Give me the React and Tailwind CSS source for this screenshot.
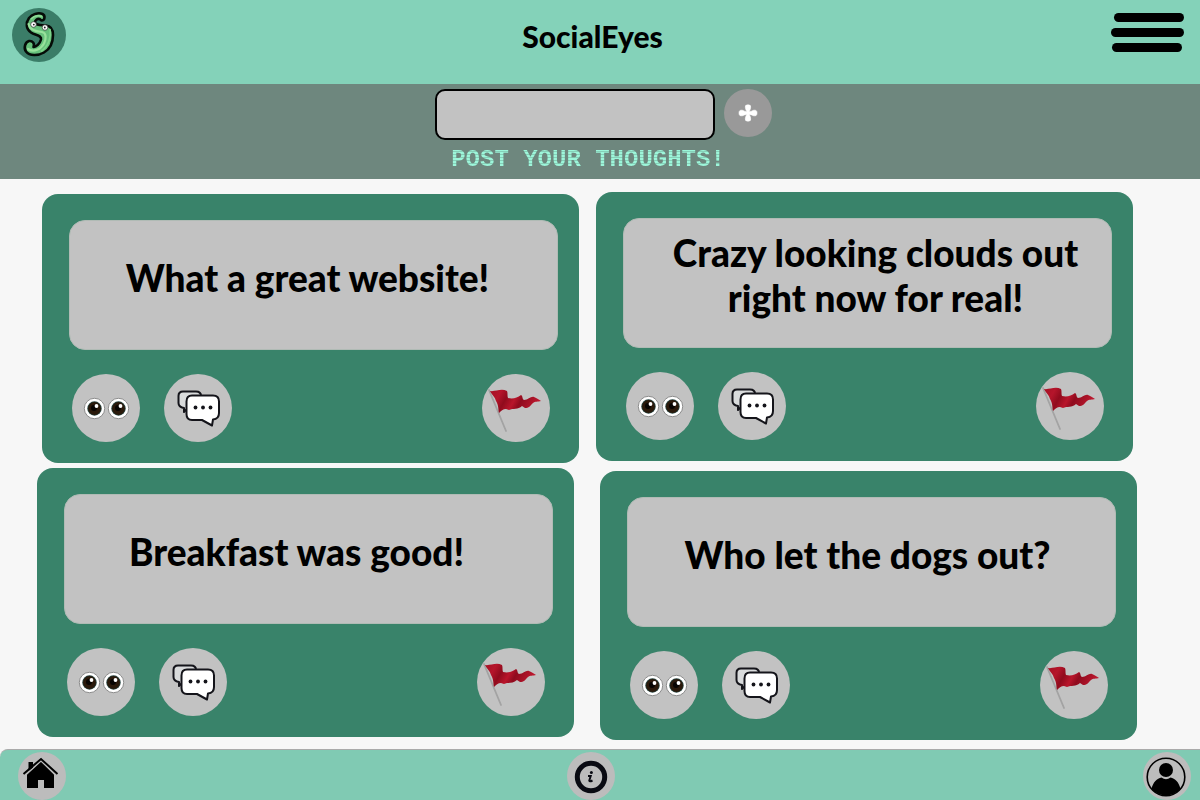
import React from "react";

function LogoIcon() {
  return (
    <svg viewBox="12 8 54 54" className="size-[54px]" aria-hidden="true">
      <circle cx="39" cy="35" r="27" fill="#3b7d68" />
      <path
        d="M41.5 20.5C45 20.5 45.500 15.500 42.500 14C38 12 32 14.500 29 18C25.500 23 26 29 31 32.500C35 35.500 42 35 41 39.500C40 43.500 36 47.500 33.500 47C35 43.500 32.500 40.500 29 41C25 42 23.500 48 26 51.500C29.500 56 38 56 44 52.500C50 49 53 42 53 35C53 29 51 26 46 25.500C41 25 36.500 25.500 35 23C34.500 20 37.500 18.500 39.500 19C40.500 19.500 41 20.500 41.500 20.500Z"
        fill="#66c07b"
        stroke="#050b07"
        strokeWidth="2.6"
        strokeLinejoin="round"
      />
      <path d="M28.500 24C29.500 30 36 31.500 42 32C47 33 46 39 44 43.500C41 49 34 53 28 49" fill="none" stroke="#98e19b" strokeWidth="2.2" strokeLinecap="round" />
      <path d="M50 29C51.500 37 48.500 46 41 51.500" fill="none" stroke="#7fd58b" strokeWidth="1.6" />
      <path d="M31 19C34 16 38 15 42 16.500" fill="none" stroke="#8fdb96" strokeWidth="1.5" />
      <circle cx="33.5" cy="24.5" r="2.8" fill="#fff" stroke="#333" strokeWidth=".7" />
      <circle cx="45" cy="27.5" r="2.8" fill="#fff" stroke="#333" strokeWidth=".7" />
      <circle cx="33.8" cy="24.6" r=".9" fill="#222" />
      <circle cx="44.8" cy="27.5" r=".9" fill="#222" />
    </svg>
  );
}

function Eye({ cx }) {
  return (
    <g>
      <circle cx={cx} cy="34.5" r="10.2" fill="#fff" stroke="#777" strokeWidth=".8" />
      <circle cx={cx} cy="34.5" r="7.2" fill="#24423f" />
      <circle cx={cx} cy="34.5" r="6.4" fill="#2a190b" />
      <circle cx={cx - 0.5} cy="34" r="3" fill="#080503" />
      <circle cx={cx + 2} cy="32" r="1.9" fill="#fff" />
    </g>
  );
}

function EyesIcon() {
  return (
    <svg viewBox="0 0 68 68" className="size-full" aria-hidden="true">
      <Eye cx={22.5} />
      <Eye cx={46.5} />
    </svg>
  );
}

function CommentsIcon() {
  return (
    <svg viewBox="0 0 68 68" className="size-full" stroke="#14141a" strokeWidth="2" strokeLinejoin="round" aria-hidden="true">
      <path d="M19 17.5H32Q37 17.5 37 22V34H24L20 38V34Q14.5 33 14.5 29V22Q14.5 17.5 19 17.5Z" fill="#d9dbdc" />
      <path d="M28 21.5H49Q55 21.5 55 27.5V39Q55 45 49 45.5L48 51.5L38 46H28Q22.5 46 22.5 40V27.5Q22.5 21.5 28 21.5Z" fill="#fff" />
      <g fill="#14141a" stroke="none">
        <circle cx="31.5" cy="33.5" r="1.9" />
        <circle cx="39" cy="33.5" r="1.9" />
        <circle cx="46.5" cy="33.5" r="1.9" />
      </g>
    </svg>
  );
}

function FlagIcon() {
  return (
    <svg viewBox="0 0 68 68" className="size-full" aria-hidden="true">
      <defs>
        <linearGradient id="flagRed" x1="0" x2="1" y1="0" y2="0.25">
          <stop offset="0" stopColor="#a51024" />
          <stop offset=".22" stopColor="#b5152b" />
          <stop offset=".38" stopColor="#900b1d" />
          <stop offset=".55" stopColor="#b9152b" />
          <stop offset=".68" stopColor="#8f0b1e" />
          <stop offset="1" stopColor="#bb182e" />
        </linearGradient>
      </defs>
      <path d="M7 16L24 57" stroke="#a3a3a3" strokeWidth="1.8" strokeLinecap="round" />
      <path d="M8 17C13 18 19 14 25 17C26 19 25 22 26 24C31 25 35 24 39 21C41 22 40 25 42 26C46 26 49 22 52 23C55 24 57 26 59 27C56 28 53 27 51 29C48 32 47 34 43 34L40 32C36 36 31 34 27 36L24 35C21 35 19 37 17 39C16 35 17 32 14 27C13 23 10 21 8 17Z" fill="url(#flagRed)" />
    </svg>
  );
}

function HomeIcon() {
  return (
    <svg viewBox="0 0 48 48" className="size-full" aria-hidden="true">
      <path d="M10.5 19V10H15V16Z" fill="#000" />
      <path d="M9 36V21.5L23 9.5L36 21.5V36H26V28H20V36Z" fill="#000" />
      <path d="M7.500 23.200L23 9L37.500 23.200" fill="none" stroke="#bcbcbc" strokeWidth="1.2" />
      <path d="M5.5 22L23 7L39.5 22" fill="none" stroke="#000" strokeWidth="2" />
    </svg>
  );
}

function InfoIcon() {
  return (
    <svg viewBox="0 0 48 48" className="size-full" aria-hidden="true">
      <circle cx="24" cy="25" r="13.7" fill="none" stroke="#090a12" strokeWidth="5" />
      <circle cx="24.4" cy="20.6" r="1.5" fill="#090a12" />
      <path d="M21 24H23.700L22.300 28.500Q22.500 30 25.500 28.500" fill="none" stroke="#090a12" strokeWidth="2" />
    </svg>
  );
}

function ProfileIcon() {
  return (
    <svg viewBox="0 0 48 48" className="size-full" aria-hidden="true">
      <circle cx="23" cy="25" r="18.8" fill="none" stroke="#000" strokeWidth="1.6" />
      <circle cx="23" cy="18" r="7" fill="#000" />
      <path d="M8.500 37C10 30 14 26.500 18.500 25.500Q23 29 27.500 25.500C32 26.500 36 30 37.500 37Q31 43.500 23 43.500T8.500 37Z" fill="#000" />
    </svg>
  );
}

function RoundButton({ label, className = "", children }) {
  return (
    <button type="button" aria-label={label} className={`size-[68px] shrink-0 rounded-full bg-[#c2c2c2] ${className}`}>
      {children}
    </button>
  );
}

function PostCard({ text, className, textClassName = "" }) {
  return (
    <article className={`rounded-2xl bg-[#39836a] pt-[26px] pr-[21px] pb-[21px] pl-[27px] ${className}`}>
      <div className={`flex h-[130px] items-center justify-center rounded-2xl border border-[#b0bbb5] bg-[#c2c2c2] pb-4 ${textClassName}`}>
        <p className="text-center text-[37px] leading-[45px] font-black whitespace-pre-line">{text}</p>
      </div>
      <div className="mt-6 flex gap-6 pr-2 pl-[3px]">
        <RoundButton label="Watch"><EyesIcon /></RoundButton>
        <RoundButton label="Comments"><CommentsIcon /></RoundButton>
        <RoundButton label="Report" className="ml-auto"><FlagIcon /></RoundButton>
      </div>
    </article>
  );
}

export default function App() {
  return (
    <div className="flex min-h-screen flex-col bg-[#f7f7f7] font-['Lato',sans-serif] text-black">
      <header className="flex h-[84px] items-start justify-between bg-[#84d2b9] pt-2 pr-4 pl-3">
        <a href="#home" aria-label="SocialEyes home"><LogoIcon /></a>
        <h1 className="pt-2 pl-2 text-[30px] leading-10 font-black">SocialEyes</h1>
        <button type="button" aria-label="Menu" className="mt-[5px]">
          <svg viewBox="0 0 73 39" className="h-[39px] w-[73px]" aria-hidden="true">
            <rect x="3" width="70" height="9" rx="4.5" />
            <rect y="15" width="73" height="9" rx="4.5" />
            <rect x="1" y="30" width="70" height="9" rx="4.5" />
          </svg>
        </button>
      </header>

      <form className="flex h-[95px] flex-col items-center bg-[#6e877e] pt-[5px]" onSubmit={(e) => e.preventDefault()}>
        <div className="flex items-start gap-[9px] pl-[7px]">
          <input id="thought" type="text" className="h-[51px] w-[280px] rounded-[10px] border-2 border-black bg-[#c2c2c2] px-3 text-lg outline-none" />
          <button type="submit" aria-label="Post" className="size-12 rounded-full bg-[#999]">
            <svg viewBox="0 0 48 48" className="size-full" fill="#fff" aria-hidden="true">
              <path d="M21.3 18Q21 15.800 24 15.800T26.700 18Q26.500 20.500 25.200 22.800Q27.500 22.300 29.500 21.300Q33 20.500 33 24T29.500 26.700Q27.500 25.700 25.200 25.200Q26.500 27.500 26.700 30Q27 32.200 24 32.200T21.300 30Q21.500 27.500 22.800 25.200Q20.500 25.700 18.500 26.700Q15 27.500 15 24T18.500 21.300Q20.500 22.300 22.800 22.800Q21.500 20.500 21.300 18Z" stroke="#fff" strokeWidth=".6" />
            </svg>
          </button>
        </div>
        <label htmlFor="thought" className="mr-6 bg-[repeating-linear-gradient(to_bottom,#9df6da_0px,#9df6da_2px,#86d0b8_2px,#86d0b8_3px)] bg-clip-text font-['Liberation_Mono',monospace] text-2xl leading-10 font-bold text-transparent">
          POST YOUR THOUGHTS!
        </label>
      </form>

      <main className="grid flex-1 grid-cols-[542fr_541fr] gap-[17px] pr-[63px] pb-[9px] pl-[37px]">
        <section className="flex flex-col gap-[5px] pt-[15px]">
          <PostCard className="w-[calc(100%-5px)] self-end" textClassName="pr-3" text="What a great website!" />
          <PostCard className="w-[calc(100%-5px)] self-start" textClassName="pr-6" text="Breakfast was good!" />
        </section>
        <section className="flex flex-col gap-[10px] pt-[13px]">
          <PostCard className="w-[calc(100%-4px)] self-start" textClassName="pl-4" text={"Crazy looking clouds out\nright now for real!"} />
          <PostCard className="w-[calc(100%-4px)] self-end" textClassName="pr-2" text="Who let the dogs out?" />
        </section>
      </main>

      <footer className="h-[51px] rounded-tl-lg border-t border-[#aaa] bg-[#80cab3] pt-[2px] pr-[9px] pl-[18px]">
        <nav className="flex justify-between">
          <a href="#home" aria-label="Home" className="size-12 rounded-full bg-[#bcbcbc]"><HomeIcon /></a>
          <a href="#about" aria-label="About" className="mr-7 size-12 rounded-full bg-[#bcbcbc]"><InfoIcon /></a>
          <a href="#profile" aria-label="Profile" className="size-12 rounded-full bg-[#bcbcbc]"><ProfileIcon /></a>
        </nav>
      </footer>
    </div>
  );
}
